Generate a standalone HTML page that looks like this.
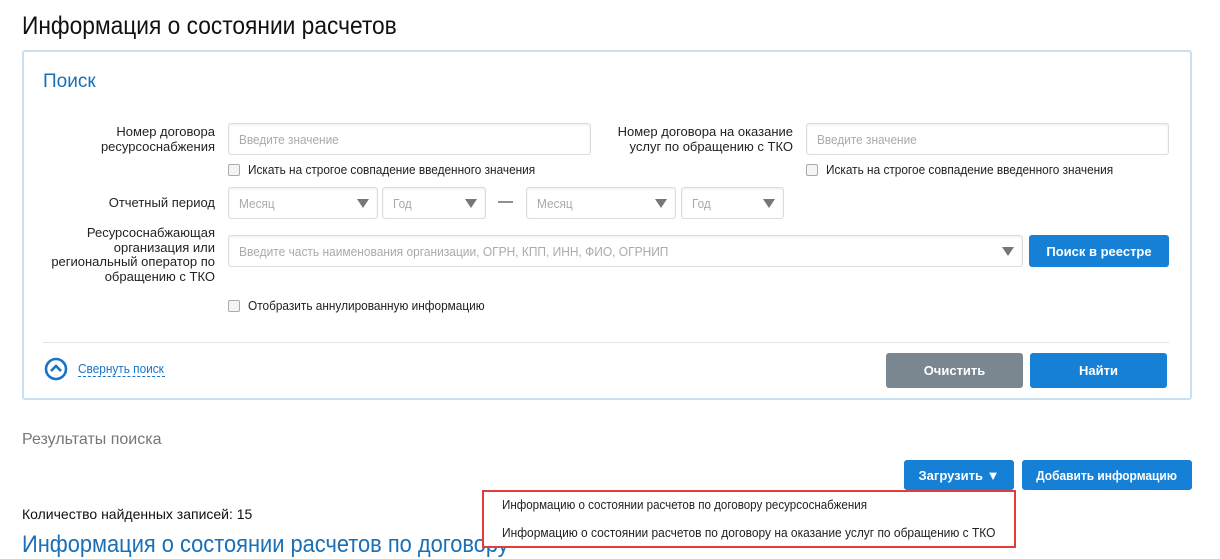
<!DOCTYPE html>
<html><head><meta charset="utf-8"><style>
*{box-sizing:border-box;margin:0;padding:0}
body{width:1220px;height:548px;overflow:hidden;background:#fff;position:relative;font-family:"Liberation Sans",sans-serif;color:#222;font-size:13px}
.a{position:absolute;white-space:nowrap}
.n{display:inline-block;transform:scaleX(.91);transform-origin:left center;white-space:nowrap}
.inp{position:absolute;border:1px solid #dcdcdc;border-radius:3px;background:#fff;color:#aaa;font-size:13px;padding-left:10px;display:flex;align-items:center;box-shadow:inset 0 1px 2px rgba(0,0,0,.08)}
.tri{position:absolute;width:0;height:0;border-left:6px solid transparent;border-right:6px solid transparent;border-top:9px solid #777}
.cb{position:absolute;width:12px;height:12px;border:1px solid #aaa;border-radius:2px;background:#f4f4f4}
.lbl{position:absolute;text-align:right;line-height:14.5px;font-size:13px}
.btn{position:absolute;color:#fff;font-weight:bold;font-size:13px;display:flex;align-items:center;justify-content:center;border-radius:3px;white-space:nowrap}
</style></head><body>
<div class="a" style="left:22px;top:12px;font-size:25px;color:#111"><span class="n" style="transform:scaleX(.91)">Информация о состоянии расчетов</span></div>
<div class="a" style="left:22px;top:50px;width:1170px;height:350px;border:2px solid #c8e0f2;border-radius:3px"></div>
<div class="a" style="left:43px;top:71px;font-size:19px;color:#1a6fb5">Поиск</div>

<div class="lbl" style="left:60px;top:125px;width:155px">Номер договора<br>ресурсоснабжения</div>
<div class="inp" style="left:228px;top:123px;width:363px;height:32px"><span class="n">Введите значение</span></div>
<div class="cb" style="left:228px;top:164px"></div>
<div class="a" style="left:248px;top:162px"><span class="n">Искать на строгое совпадение введенного значения</span></div>

<div class="lbl" style="left:600px;top:125px;width:193px">Номер договора на оказание<br>услуг по обращению с ТКО</div>
<div class="inp" style="left:806px;top:123px;width:363px;height:32px"><span class="n">Введите значение</span></div>
<div class="cb" style="left:806px;top:164px"></div>
<div class="a" style="left:826px;top:162px"><span class="n">Искать на строгое совпадение введенного значения</span></div>

<div class="lbl" style="left:60px;top:196px;width:155px">Отчетный период</div>
<div class="inp" style="left:228px;top:187px;width:150px;height:32px"><span class="n">Месяц</span></div><div class="tri" style="left:357px;top:199px"></div>
<div class="inp" style="left:382px;top:187px;width:104px;height:32px"><span class="n">Год</span></div><div class="tri" style="left:465px;top:199px"></div>
<div class="a" style="left:498px;top:193px;font-size:15px">—</div>
<div class="inp" style="left:526px;top:187px;width:150px;height:32px"><span class="n">Месяц</span></div><div class="tri" style="left:655px;top:199px"></div>
<div class="inp" style="left:681px;top:187px;width:103px;height:32px"><span class="n">Год</span></div><div class="tri" style="left:763px;top:199px"></div>

<div class="lbl" style="left:40px;top:226px;width:175px">Ресурсоснабжающая<br>организация или<br>региональный оператор по<br>обращению с ТКО</div>
<div class="inp" style="left:228px;top:235px;width:795px;height:32px"><span class="n" style="transform:scaleX(.92)">Введите часть наименования организации, ОГРН, КПП, ИНН, ФИО, ОГРНИП</span></div><div class="tri" style="left:1002px;top:247px"></div>
<div class="btn" style="left:1029px;top:235px;width:140px;height:32px;background:#1580d6">Поиск в реестре</div>

<div class="cb" style="left:228px;top:300px"></div>
<div class="a" style="left:248px;top:298px"><span class="n">Отобразить аннулированную информацию</span></div>

<div class="a" style="left:43px;top:342px;width:1126px;height:1px;background:#e3e3e3"></div>
<svg class="a" style="left:44px;top:357px" width="24" height="24" viewBox="0 0 24 24"><circle cx="12" cy="12" r="10" fill="none" stroke="#1a73c8" stroke-width="2.6"/><path d="M7 14 L12 9 L17 14" fill="none" stroke="#1a73c8" stroke-width="2.6"/></svg>
<div class="a" style="left:78px;top:361px;color:#1a73c8;border-bottom:1px dashed #1a73c8;line-height:15px;width:87px;overflow:visible"><span class="n">Свернуть поиск</span></div>
<div class="btn" style="left:886px;top:353px;width:137px;height:35px;background:#7a8690">Очистить</div>
<div class="btn" style="left:1030px;top:353px;width:137px;height:35px;background:#1580d6">Найти</div>

<div class="a" style="left:22px;top:431px;font-size:16px;color:#777">Результаты поиска</div>
<div class="btn" style="left:904px;top:460px;width:110px;height:30px;background:#1580d6">Загрузить ▼</div>
<div class="btn" style="left:1022px;top:460px;width:170px;height:30px;background:#1580d6"><span style="display:inline-block;transform:scaleX(.92)">Добавить информацию</span></div>
<div class="a" style="left:22px;top:506px;font-size:14px;color:#111">Количество найденных записей: 15</div>
<div class="a" style="left:22px;top:531px;font-size:24px;color:#1a6fb5"><span class="n">Информация о состоянии расчетов по договору</span></div>
<div class="a" style="left:482px;top:490px;width:534px;height:58px;border:2px solid #e23c3c;background:#fff"></div>
<div class="a" style="left:502px;top:497px;font-size:13px"><span class="n" style="transform:scaleX(.89)">Информацию о состоянии расчетов по договору ресурсоснабжения</span></div>
<div class="a" style="left:502px;top:525px;font-size:13px"><span class="n" style="transform:scaleX(.92)">Информацию о состоянии расчетов по договору на оказание услуг по обращению с ТКО</span></div>
</body></html>
